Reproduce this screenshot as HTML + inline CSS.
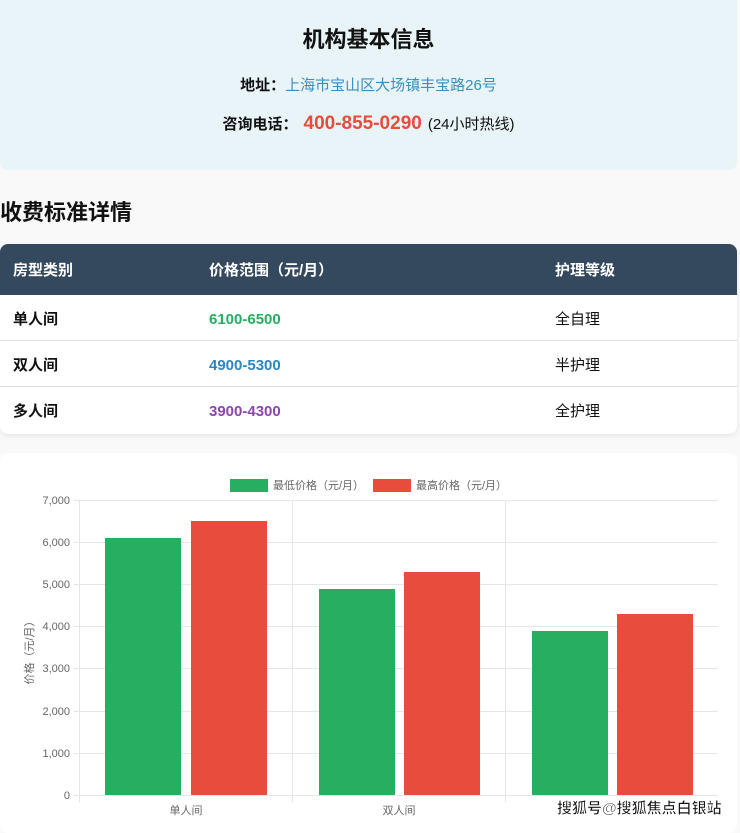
<!DOCTYPE html>
<html><head><meta charset="utf-8"><style>
*{margin:0;padding:0;box-sizing:border-box}
body{width:740px;height:824px;overflow:hidden;background:#f9f9f9;font-family:"Liberation Sans","Noto Sans CJK SC",sans-serif;color:#111;position:relative}
.info{position:absolute;left:0;top:0;width:737px;height:170px;background:#e8f4f8;border-radius:0 0 8px 8px;text-align:center}
.info h2{position:absolute;top:22px;width:100%;font-size:22px;font-weight:bold}
.addr{position:absolute;top:74px;width:100%;font-size:15px}
.addr b{font-weight:bold}.addr span{color:#3a8fc0}
.tel{position:absolute;top:113px;width:100%;font-size:15px}
.tel .n{color:#e74c3c;font-weight:bold;font-size:19px;margin:0 6px}
h3{position:absolute;left:0;top:195px;font-size:22px;font-weight:bold}
.tbl{position:absolute;left:0;top:244px;width:737px;height:190px;background:#fff;border-radius:8px;overflow:hidden;box-shadow:0 2px 6px rgba(0,0,0,.08)}
.row{position:absolute;left:0;width:100%;font-size:15px}
.row div{position:absolute}
.hd{top:0;height:51px;background:#34495e;color:#fff;font-weight:bold}
.hd div{line-height:53px}
.r{height:46px}.r div{line-height:50px}
.c1{left:13px}.c2{left:209px}.c3{left:555px}
.r .c1{font-weight:bold}.r .c2{font-weight:bold}
.chart{position:absolute;left:0;top:453px;width:737px;height:380px;background:#fff;border-radius:8px}
</style></head><body>
<div class="info">
<h2>机构基本信息</h2>
<div class="addr"><b>地址：</b><span>上海市宝山区大场镇丰宝路26号</span></div>
<div class="tel"><b>咨询电话：</b><span class="n">400-855-0290</span>(24小时热线)</div>
</div>
<h3>收费标准详情</h3>
<div class="tbl">
<div class="row hd"><div class="c1">房型类别</div><div class="c2">价格范围（元/月）</div><div class="c3">护理等级</div></div>
<div class="row r" style="top:51px;border-bottom:1px solid #ddd"><div class="c1">单人间</div><div class="c2" style="color:#27ae60">6100-6500</div><div class="c3">全自理</div></div>
<div class="row r" style="top:97px;border-bottom:1px solid #ddd"><div class="c1">双人间</div><div class="c2" style="color:#2e86c1">4900-5300</div><div class="c3">半护理</div></div>
<div class="row r" style="top:143px"><div class="c1">多人间</div><div class="c2" style="color:#8e44ad">3900-4300</div><div class="c3">全护理</div></div>
</div>
<div class="chart"></div>
<svg style="position:absolute;left:0;top:0" width="740" height="824" font-family="Liberation Sans,Noto Sans CJK SC,sans-serif" font-size="11" fill="#666">
<g stroke="#e6e6e6" stroke-width="1">
<line x1="74" y1="500.5" x2="718" y2="500.5"/><line x1="74" y1="542.5" x2="718" y2="542.5"/><line x1="74" y1="584.5" x2="718" y2="584.5"/><line x1="74" y1="626.5" x2="718" y2="626.5"/><line x1="74" y1="668.5" x2="718" y2="668.5"/><line x1="74" y1="711.5" x2="718" y2="711.5"/><line x1="74" y1="753.5" x2="718" y2="753.5"/><line x1="74" y1="795.5" x2="718" y2="795.5"/>
<line x1="79.5" y1="500" x2="79.5" y2="802"/><line x1="292.5" y1="500" x2="292.5" y2="802"/><line x1="505.5" y1="500" x2="505.5" y2="802"/>
</g>
<g text-anchor="end"><text x="70" y="504">7,000</text><text x="70" y="546">6,000</text><text x="70" y="588">5,000</text><text x="70" y="630">4,000</text><text x="70" y="672">3,000</text><text x="70" y="715">2,000</text><text x="70" y="757">1,000</text><text x="70" y="799">0</text></g>
<text transform="translate(33,650) rotate(-90)" text-anchor="middle">价格（元/月）</text>
<g fill="#27ae60"><rect x="105" y="538" width="76" height="257"/><rect x="319" y="589" width="76" height="206"/><rect x="532" y="631" width="76" height="164"/></g>
<g fill="#e74c3c"><rect x="191" y="521" width="76" height="274"/><rect x="404" y="572" width="76" height="223"/><rect x="617" y="614" width="76" height="181"/></g>
<rect x="230" y="479" width="38" height="13" fill="#27ae60"/><text x="273" y="489">最低价格（元/月）</text>
<rect x="373" y="479" width="38" height="13" fill="#e74c3c"/><text x="416" y="489">最高价格（元/月）</text>
<text x="186" y="814" text-anchor="middle">单人间</text><text x="399" y="814" text-anchor="middle">双人间</text>
<text x="557" y="813" font-size="15" font-weight="bold" fill="#111" stroke="#fff" stroke-width="0.6">搜狐号@搜狐焦点白银站</text>
</svg>
</body></html>
